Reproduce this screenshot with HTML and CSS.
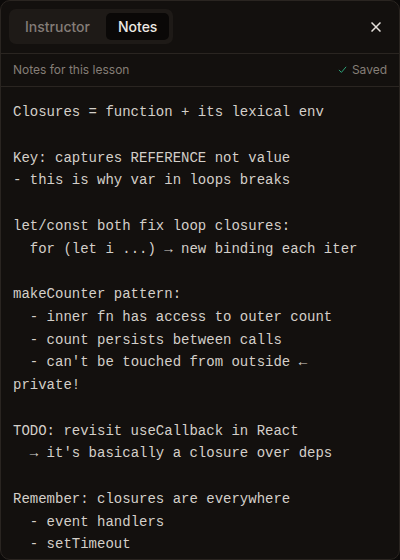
FILE: index.html
```html
<!DOCTYPE html>
<html>
<head>
<meta charset="utf-8">
<link rel="stylesheet" href="styles.css">
</head>
<body>
<div class="panel">
  <div class="header">
    <div class="tabs">
      <div class="tab">Instructor</div>
      <div class="tab active">Notes</div>
    </div>
    <button class="close" aria-label="Close">
      <svg width="10" height="10" viewBox="0 0 10 10"><path d="M0.5 0.5L9.5 9.5M9.5 0.5L0.5 9.5" stroke="currentColor" stroke-width="1.5"/></svg>
    </button>
  </div>
  <div class="subheader">
    <span class="label">Notes for this lesson</span>
    <span class="saved">
      <svg width="9" height="9" viewBox="0 0 10 10"><path d="M1 5.5L3.8 8.2L9 2" fill="none" stroke="currentColor" stroke-width="1.1"/></svg>
      <span>Saved</span>
    </span>
  </div>
  <pre class="notes">Closures = function + its lexical env

Key: captures REFERENCE not value
- this is why var in loops breaks

let/const both fix loop closures:
  for (let i ...) → new binding each iter

makeCounter pattern:
  - inner fn has access to outer count
  - count persists between calls
  - can't be touched from outside ←
private!

TODO: revisit useCallback in React
  → it's basically a closure over deps

Remember: closures are everywhere
  - event handlers
  - setTimeout</pre>
</div>
</body>
</html>
```
FILE: styles.css
```css
html, body {
  margin: 0;
  padding: 0;
  background: #0c0a09;
}
.panel {
  box-sizing: border-box;
  width: 400px;
  height: 560px;
  background: #13100e;
  border: 1px solid #2a2521;
  border-radius: 10px;
  overflow: hidden;
  display: flex;
  flex-direction: column;
  font-family: Inter, "Liberation Sans", sans-serif;
}
.header {
  height: 52px;
  border-bottom: 1px solid #2a2521;
  display: flex;
  align-items: center;
  justify-content: space-between;
  padding: 0 8px;
  flex-shrink: 0;
}
.tabs {
  display: flex;
  gap: 4px;
  padding: 4px;
  background: #1e1a17;
  border-radius: 7px;
  margin-top: -1px;
}
.tab {
  height: 27px;
  line-height: 27px;
  padding: 0 12px;
  font-size: 14px;
  font-weight: 500;
  color: #847d77;
  border-radius: 5px;
}
.tab.active {
  background: #0a0807;
  color: #ece8e3;
}
.close {
  background: none;
  border: 0;
  padding: 0;
  width: 24px;
  height: 24px;
  display: flex;
  align-items: center;
  justify-content: center;
  color: #e4dfda;
  margin-right: 3px;
  margin-top: -1px;
}
.subheader {
  height: 32px;
  border-bottom: 1px solid #2a2521;
  display: flex;
  align-items: center;
  justify-content: space-between;
  padding: 0 12px;
  font-size: 12px;
  color: #857e77;
  flex-shrink: 0;
  margin-top: -1px;
  padding-bottom: 1px;
  box-sizing: content-box;
}
.saved {
  display: flex;
  align-items: center;
  gap: 5px;
}
.saved svg {
  color: #2fa37a;
}
.notes {
  margin: 0;
  padding: 14px 12px 0;
  font-family: "Liberation Mono", "DejaVu Sans Mono", monospace;
  font-size: 14px;
  line-height: 22.75px;
  color: #d4cfc9;
  white-space: pre-wrap;
}
```
